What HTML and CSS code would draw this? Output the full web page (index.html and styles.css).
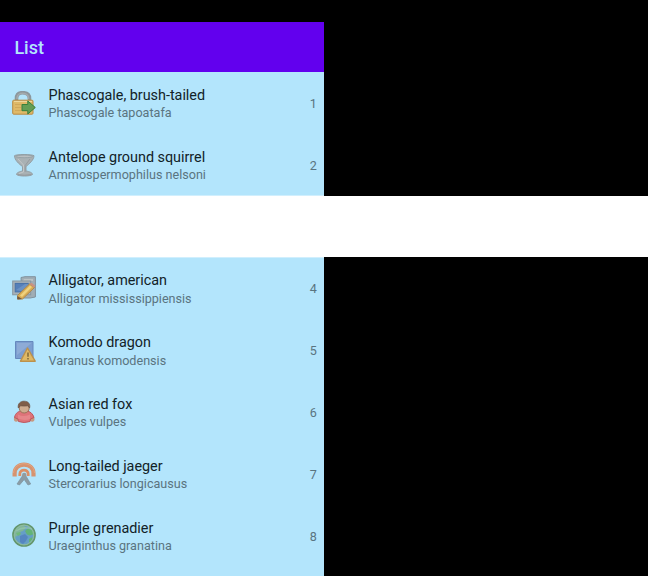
FILE: index.html
```html
<!DOCTYPE html>
<html lang="en">
<head>
<meta charset="utf-8">
<title>List</title>
<link rel="stylesheet" href="styles.css">
</head>
<body>
<header class="toolbar"><h1>List</h1></header>
<ul class="list">
  <li class="row">
    <svg class="icon" viewBox="0 0 24 24">
      <path d="M4.500 9V7.500C4.500 3 7 1.700 10.500 1.700S17.500 3 17.500 7.500V9" fill="none" stroke="#8c979d" stroke-width="3.600"/>
      <path d="M5 8V7C5 4 7.500 2.200 10.500 2.200S16.500 4 16.500 7V8" fill="none" stroke="#a4abad" stroke-width="1.500"/>
      <rect x=".7" y="9.200" width="20.300" height="14" rx="1" fill="#dfb968" stroke="#b88a43"/>
      <path d="M2 10.500H20" stroke="#eed79b"/>
      <path d="M3 13.500H10M3 16.500H9M3 19.500H10" stroke="#c79d51" stroke-opacity=".6"/>
      <path d="M10 13.500H15.800V10L23.300 16.500L15.800 23V19.700H10Z" fill="#649d55" stroke="#37803c"/>
    </svg>
    <div class="text"><div class="name">Phascogale, brush-tailed</div><div class="latin">Phascogale tapoatafa</div></div>
    <span class="number">1</span>
  </li>
  <li class="row last-before-band">
    <svg class="icon" viewBox="0 0 24 24">
      <path d="M2.500 2.700C4 1.200 20 1.200 22 2.700C22 7 17 11 14 13.500V18C17 18.500 20.500 19.500 20.500 21.500C18 23.500 7 23.500 4.500 21.500C4.500 19.500 8 18.500 10.500 18V13.500C7 11 2.500 7 2.500 2.700Z" fill="#a9b1b4" stroke="#929fa5"/>
      <ellipse cx="12.300" cy="3.400" rx="8.500" ry="1.300" fill="#babec0" stroke="#8b999f" stroke-width=".7"/>
      <path d="M6 6L11.500 12V19L7 20.500" fill="none" stroke="#c3c6c7"/>
      <path d="M18 6L13.200 12.500V19M5.500 21.500Q12 23 19.500 21.500" fill="none" stroke="#979b9e"/>
    </svg>
    <div class="text"><div class="name">Antelope ground squirrel</div><div class="latin">Ammospermophilus nelsoni</div></div>
    <span class="number">2</span>
  </li>
  <li class="row band"></li>
  <li class="row first-after-band">
    <svg class="icon" viewBox="0 0 24 24">
      <path d="M9 1.500L13 .7H23.400V21L18 22H10Z" fill="#a0adb4" stroke="#81929d"/>
      <path d="M12 3H21V5H11Z" fill="#bac2c5"/>
      <rect x=".7" y="5" width="18" height="13.800" fill="#a8b2b8" stroke="#8696a0"/>
      <rect x="3.200" y="7.400" width="13" height="8.500" fill="#557fb9" stroke="#4671a8"/>
      <path d="M4 14L13 8H16V11L9 15Z" fill="#769bc8" opacity=".65"/>
      <path d="M5.500 19.500L17.500 8L22.500 11.500L10.500 23L5.500 23Z" fill="#d9ad54" stroke="#ae874a"/>
      <path d="M8 19.500L18 9.500L20 11L10 21Z" fill="#efd27e"/>
      <path d="M17.500 8L19.500 6.800L23.300 9.800L22 11.700Z" fill="#ca9281"/>
      <path d="M5.500 20L10 23L5.300 23.500Z" fill="#71573f"/>
    </svg>
    <div class="text"><div class="name">Alligator, american</div><div class="latin">Alligator mississippiensis</div></div>
    <span class="number">4</span>
  </li>
  <li class="row">
    <svg class="icon" viewBox="0 0 24 24">
      <path d="M3.500 3.500H21V20.500H3.500Z" fill="#7c9ed0" stroke="#6688bd"/>
      <path d="M5 5H19.500L5 17Z" fill="#8eabd6"/>
      <path d="M15.500 10L23.200 23.200H8.500Z" fill="#dfb965" stroke="#bc914c" stroke-width="1.400" stroke-linejoin="round"/>
      <path d="M16 14.500V18.700M16 20V21.500" stroke="#8b713d" stroke-width="1.700"/>
    </svg>
    <div class="text"><div class="name">Komodo dragon</div><div class="latin">Varanus komodensis</div></div>
    <span class="number">5</span>
  </li>
  <li class="row">
    <svg class="icon" viewBox="0 0 24 24">
      <ellipse cx="4.200" cy="19" rx="2.300" ry="2.700" fill="#c69a82"/>
      <ellipse cx="20.200" cy="19" rx="2.300" ry="2.700" fill="#c69a82"/>
      <path d="M2.500 17.500C3.500 12.500 7 11 10 11H15C18.500 11.500 21 14 22 17.500L18.500 19L18 21.500Q12 23.500 6.500 21.500L6 19Z" fill="#df7379" stroke="#bc575f"/>
      <path d="M6 14.500Q11 17.500 18 14.500V19Q12 21 6 18.500Z" fill="#e6868a"/>
      <ellipse cx="12.200" cy="8" rx="5" ry="5" fill="#cfab8f" stroke="#9c7359"/>
      <path d="M6.300 8C5.500 3.500 8.500 1.200 12 1.200C16.500 1.200 18.500 4 17.600 8L16 5.800Q12 6.300 8.500 5.800Z" fill="#805d48" stroke="#6c5042" stroke-width=".7"/>
    </svg>
    <div class="text"><div class="name">Asian red fox</div><div class="latin">Vulpes vulpes</div></div>
    <span class="number">6</span>
  </li>
  <li class="row">
    <svg class="icon" viewBox="0 0 24 24">
      <path d="M2.600 14.500V11.500C2.600 6 6.500 2.600 12 2.600S21.500 6 21.500 11.500V14.500" fill="none" stroke="#d69370" stroke-width="4.200"/>
      <path d="M1.500 11C2 5 6.500 1.700 12 1.700S22 5 22.500 11" fill="none" stroke="#e4a47f"/>
      <path d="M7.800 14V12C7.800 6.700 16.200 6.700 16.200 12V14" fill="none" stroke="#db8f66" stroke-width="2.800"/>
      <path d="M11 13H13.300L18.700 22L16 23L12.200 17.500L7.500 23L5 22Z" fill="#8b9ca5" stroke="#7b929d" stroke-width=".7"/>
      <circle cx="12.200" cy="13" r="2.200" fill="#929ca0"/>
    </svg>
    <div class="text"><div class="name">Long-tailed jaeger</div><div class="latin">Stercorarius longicausus</div></div>
    <span class="number">7</span>
  </li>
  <li class="row">
    <svg class="icon" viewBox="0 0 24 24">
      <circle cx="12" cy="12" r="11" fill="#669fc5" stroke="#63966b" stroke-width="1.700"/>
      <path d="M3 8C5 4 8 2.500 12 2.500L14 5L11 8L8 9L5 13L3 14Z" fill="#7fb59a"/>
      <path d="M13 8L16 5L20 7L22 11L18 12.500L15 11.500ZM17 16L20.500 14L20 17L17 20Z" fill="#62b378"/>
      <path d="M4 10L8 9L9 11L6 13Z" fill="#6fb978"/>
      <path d="M8 13L13 11L16 14L14 18L11 21L8 19Z" fill="#5586c0"/>
      <circle cx="12" cy="12" r="9.800" fill="none" stroke="#96c09a" stroke-width="1.200" opacity=".8"/>
      <path d="M4 8Q11 3 20 6" fill="none" stroke="#a4cdb5" stroke-width="1.500" opacity=".5"/>
    </svg>
    <div class="text"><div class="name">Purple grenadier</div><div class="latin">Uraeginthus granatina</div></div>
    <span class="number">8</span>
  </li>
  <li class="row"></li>
</ul>
</body>
</html>
```
FILE: styles.css
```css
* { box-sizing: border-box; }
body {
  margin: 0;
  height: 576px;
  padding-top: 22px;
  overflow: hidden;
  background: #000;
  font-family: Roboto, sans-serif;
}
.toolbar {
  width: 324px;
  height: 50px;
  padding-left: 14.4px;
  display: flex;
  align-items: center;
  background: #6200ee;
  color: #b3e5fc;
}
.toolbar h1 {
  margin: 2px 0 0;
  font-size: 18px;
  line-height: 22px;
  font-weight: 500;
}
.list {
  height: 504px;
  overflow: hidden;
  margin: 0;
  padding: 0;
  list-style: none;
}
.row {
  width: 324px;
  height: 61.8px;
  padding: 0 7.2px 0 12px;
  display: flex;
  align-items: center;
  background: #b3e5fc;
}
.row.band {
  width: 648px;
  background: #fff;
}
.last-before-band { box-shadow: inset 0 -1px #d1effd; }
.first-after-band { box-shadow: inset 0 1px #d1effd; }
.icon {
  width: 24px;
  height: 24px;
  flex: none;
  margin-right: 12.6px;
}
.text {
  flex: 1;
  padding-top: 3.2px;
}
.name {
  font-size: 14.4px;
  line-height: 17.4px;
  letter-spacing: -.02px;
  color: #122227;
}
.latin {
  font-size: 12.6px;
  line-height: 17.6px;
  color: #5a7480;
}
.number {
  padding-top: 1.4px;
  font-size: 12.6px;
  color: #5a7480;
}
```
